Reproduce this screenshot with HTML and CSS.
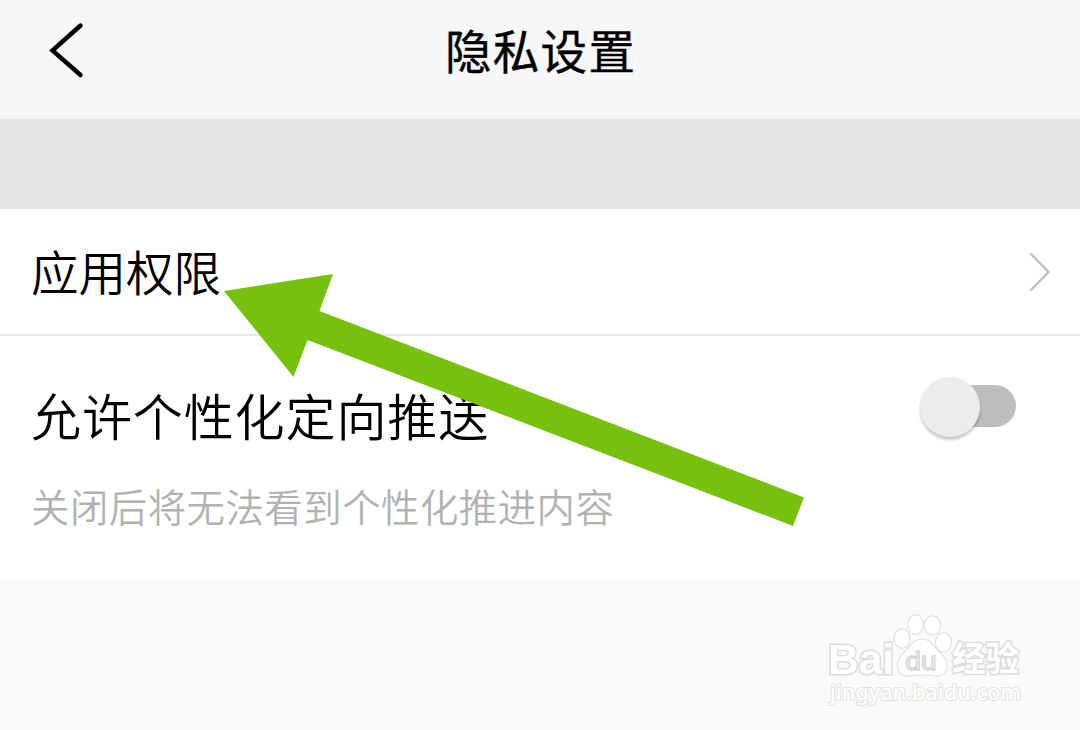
FILE: index.html
```html
<!DOCTYPE html>
<html lang="zh-CN">
<head>
    <meta charset="UTF-8">
    <meta name="viewport" content="width=device-width, initial-scale=1.0">
    <title>隐私设置</title>
    <link rel="stylesheet" href="styles.css">
</head>
<body>

<div class="page">
    <header class="topbar">
        <svg class="back" viewBox="0 0 40 60" width="40" height="60">
            <path d="M34.500 5.5 L6.500 30.5 L34.500 55"/>
        </svg>
        <h1 class="title">隐私设置</h1>
    </header>

    <div class="gap"></div>

    <div class="row link-row">
        <span class="label">应用权限</span>
        <svg class="chevron" viewBox="0 0 24 42" width="24" height="42">
            <path d="M2.5 2.5 L20.5 21 L2.5 39.5"/>
        </svg>
    </div>

    <div class="row push-row">
        <div class="push-text">
            <span class="label push-label">允许个性化定向推送</span>
            <p class="note">关闭后将无法看到个性化推进内容</p>
        </div>
        <div class="switch"><div class="knob"></div></div>
    </div>

    <footer class="bottom">
        <svg class="watermark" viewBox="820 605 210 110" width="210" height="110">
            <text class="wm-bold" x="828" y="673.500" font-size="42" textLength="66" lengthAdjust="spacingAndGlyphs">Bai</text>
            <g class="paw">
                <ellipse cx="902" cy="638.500" rx="7.5" ry="9.3"/>
                <ellipse cx="915.500" cy="624.500" rx="7.2" ry="9.5"/>
                <ellipse cx="932.500" cy="625.500" rx="7.5" ry="9.3"/>
                <ellipse cx="943.500" cy="642.500" rx="7.5" ry="9.3"/>
                <path d="M922 639.500 C929 639.500 932 644 936 649 C941 655 947 658 946.500 666 C946 673 941 676.500 935 675.500 C926 674 917 674 909 675.500 C902 676.500 898 671 898 665 C898 658 903 655 908 649 C912 644 915 639.500 922 639.500 Z"/>
            </g>
            <text class="wm-du" x="905.500" y="669.500" font-size="26" textLength="31" lengthAdjust="spacingAndGlyphs">du</text>
            <text class="wm-cjk" x="952" y="671" font-size="34" textLength="67" lengthAdjust="spacingAndGlyphs">经验</text>
            <text class="wm-url" x="830" y="700" font-size="22" textLength="191" lengthAdjust="spacingAndGlyphs">jingyan.baidu.com</text>
        </svg>
    </footer>

    <svg class="arrow" viewBox="0 0 1080 730" width="1080" height="730">
        <polygon points="224,291 333,274 319.5,311 804,497.5 793,526 307.500,340 293.500,377"/>
    </svg>
</div>

</body>
</html>
```

FILE: styles.css
```css
*{box-sizing:border-box;}
body{margin:0;font-family:"Noto Sans CJK SC","Noto Sans",sans-serif;color:#000;background:#fff;}
.page{position:relative;width:1080px;height:730px;overflow:hidden;display:flex;flex-direction:column;}

.topbar{height:119px;background:#f7f7f7;display:grid;grid-template-columns:445px 1fr 445px;padding-bottom:21px;align-items:center;}
.back{margin-left:46px;margin-top:2px;}
.back path{fill:none;stroke:#000;stroke-width:4.4;stroke-linecap:round;}
.title{margin:0;font-size:46.5px;line-height:68px;font-weight:400;letter-spacing:1.3px;white-space:nowrap;-webkit-text-stroke:0.4px;}

.gap{height:90px;background:#e5e5e5;}

.row{display:flex;justify-content:space-between;background:#fff;}
.link-row{height:127px;padding:0 28px 0 31px;align-items:center;border-bottom:2px solid #e8e8e8;}
.label{font-size:47.5px;line-height:70px;font-weight:350;white-space:nowrap;}
.link-row .label{margin-top:-2px;}
.chevron{margin-top:1px;}
.chevron path{fill:none;stroke:#bfbfbf;stroke-width:2.4;}

.push-row{height:243px;padding:43px 64px 0 31px;}
.push-label{display:block;font-size:50px;letter-spacing:.9px;}
.note{margin:28px 0 0;font-size:38.4px;line-height:56px;font-weight:350;letter-spacing:.5px;color:#b2b2b2;white-space:nowrap;}

.switch{width:90px;height:42px;margin-top:6px;border-radius:21px;background:#bdbdbd;display:flex;align-items:center;}
.knob{flex:none;width:60px;height:60px;margin:2px 0 0 -6px;border-radius:50%;background:#ececec;box-shadow:0 3px 3px rgba(0,0,0,.22);}

.bottom{flex:1;background:#fafafa;display:flex;justify-content:flex-end;padding:26px 50px 0 0;}
.wm-bold,.wm-cjk,.wm-url,.paw{fill:#fff;stroke:#dcdcdc;stroke-width:2;paint-order:stroke;}
.wm-bold{font-family:"Liberation Sans",sans-serif;font-weight:700;stroke-width:3;}
.wm-du{font-family:"Liberation Sans",sans-serif;fill:#fafafa;stroke:#d5d5d5;stroke-width:1.4;font-weight:400;}
.wm-cjk{font-weight:700;stroke-width:3;}
.wm-url{font-family:"Noto Sans",sans-serif;font-weight:500;stroke:#e2e2e2;stroke-width:2;}

/* pointer drawn over the rows */
.arrow{position:absolute;left:0;top:0;pointer-events:none;}
.arrow polygon{fill:#76c10d;}
```
